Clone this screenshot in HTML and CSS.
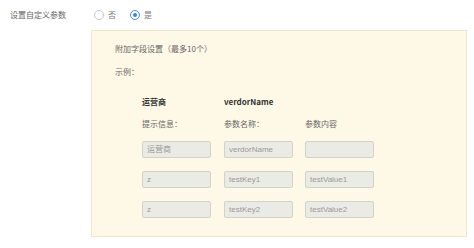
FILE: index.html
```html
<!DOCTYPE html>
<html>
<head>
<meta charset="utf-8">
<link rel="stylesheet" href="styles.css">
</head>
<body>
<div class="row-top">
  <span class="label">设置自定义参数</span>
  <span class="radios">
    <span class="radio"><span class="circle"></span><span class="rtext">否</span></span>
    <span class="radio on"><span class="circle"></span><span class="rtext">是</span></span>
  </span>
</div>
<div class="box">
  <div class="title">附加字段设置（最多10个）</div>
  <div class="example">示例：</div>
  <div class="grid">
    <div class="head">运营商</div>
    <div class="head">verdorName</div>
    <div class="head"></div>
    <div class="cap">提示信息：</div>
    <div class="cap">参数名称：</div>
    <div class="cap">参数内容</div>
    <div class="inp">运营商</div>
    <div class="inp">verdorName</div>
    <div class="inp"></div>
    <div class="inp">z</div>
    <div class="inp">testKey1</div>
    <div class="inp">testValue1</div>
    <div class="inp">z</div>
    <div class="inp">testKey2</div>
    <div class="inp">testValue2</div>
  </div>
</div>
</body>
</html>
```
FILE: styles.css
```css
html, body {
  margin: 0;
  padding: 0;
  background: #ffffff;
}
body {
  font-family: "Noto Sans CJK SC", "Liberation Sans", sans-serif;
  font-size: 8px;
  color: #666666;
  width: 474px;
  height: 248px;
  overflow: hidden;
}
.row-top {
  display: flex;
  align-items: center;
  height: 30px;
}
.label {
  margin-left: 10px;
  width: 84px;
  color: #666;
  line-height: 12px;
}
.radios {
  display: flex;
  align-items: center;
}
.radio {
  display: flex;
  align-items: center;
  margin-right: 14px;
}
.circle {
  width: 8px;
  height: 8px;
  border: 1px solid #c8c8c8;
  border-radius: 50%;
  box-sizing: content-box;
  position: relative;
  background: #fff;
}
.radio.on .circle {
  border-color: #4a90e2;
}
.radio.on .circle::after {
  content: "";
  position: absolute;
  left: 2px;
  top: 2px;
  width: 4px;
  height: 4px;
  border-radius: 50%;
  background: #3a86e0;
}
.rtext {
  margin-left: 4px;
  color: #777;
  line-height: 12px;
}
.box {
  margin-left: 91px;
  width: 376px;
  height: 207px;
  box-sizing: border-box;
  background: #fef9e7;
  border: 1px solid #efe6cc;
  padding: 12px 0 0 23px;
}
.title {
  line-height: 12px;
}
.example {
  line-height: 12px;
  margin-top: 11px;
}
.grid {
  display: grid;
  grid-template-columns: 82px 81px 80px;
  margin-left: 27px;
  margin-top: 18px;
  row-gap: 13px;
}
.head {
  font-weight: bold;
  color: #333;
  line-height: 12px;
}
.cap {
  line-height: 12px;
  margin-top: -3px;
  margin-bottom: -2px;
}
.inp {
  width: 69px;
  height: 17px;
  box-sizing: border-box;
  background: #ebebe6;
  border: 1px solid #d2d2ca;
  border-radius: 2px;
  color: #999;
  line-height: 15px;
  padding-left: 4px;
  font-family: "Liberation Sans", "Noto Sans CJK SC", sans-serif;
}
```
